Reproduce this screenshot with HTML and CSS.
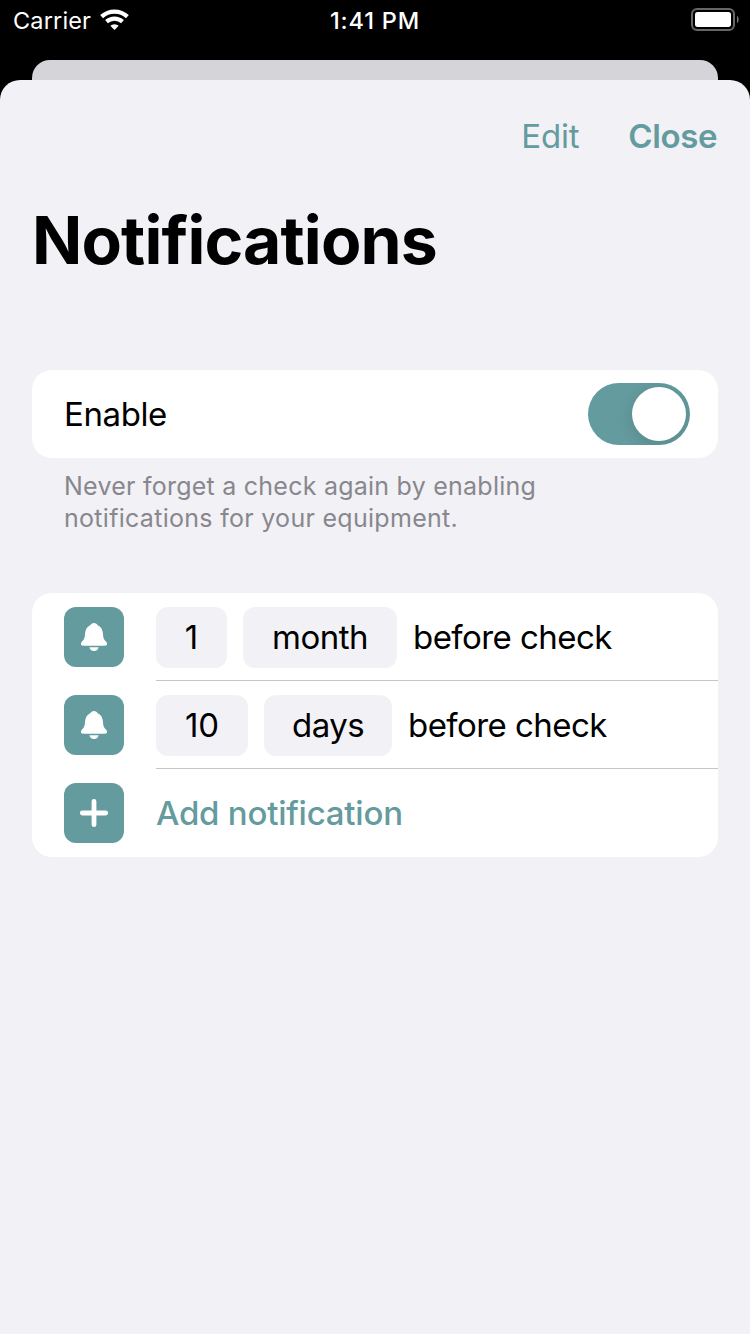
FILE: index.html
```html
<!DOCTYPE html>
<html lang="en">
<head>
<meta charset="utf-8">
<title>Notifications</title>
<link rel="stylesheet" href="styles.css">
</head>
<body>
<svg class="symbols" aria-hidden="true">
  <symbol id="bell" viewBox="0 0 60 60">
    <path fill="#fff" d="M30 16C31.8 16 33.2 17 33.8 18.3C37.2 20 38.8 23.2 39 27C39.2 31 39.8 32.4 42 34.4C42.8 35.2 43.1 36 43.1 36.8C43.1 38.1 42.2 38.8 40.9 38.8H19.1C17.8 38.8 16.9 38.1 16.9 36.8C16.9 36 17.2 35.2 18 34.4C20.2 32.4 20.8 31 21 27C21.2 23.2 22.8 20 26.2 18.3C26.8 17 28.2 16 30 16ZM25.4 40.3H34.6C34.2 42.6 32.5 44 30 44S25.8 42.6 25.4 40.3Z"/>
  </symbol>
</svg>
<header class="status">
  <div class="carrier"><span class="carrier-name">Carrier</span>
    <svg class="wifi" width="30" height="23" viewBox="0 0 30 23"><g fill="none" stroke="#fff" stroke-width="4.2"><path d="M1.6 8.6A19 19 0 0 1 27.4 8.6"/><path d="M6.5 13.6A12 12 0 0 1 22.5 13.6"/></g><path fill="#fff" d="M10.3 17.8A6.2 6.2 0 0 1 18.7 17.8L14.5 22.1Z"/></svg>
  </div>
  <time class="time">1:41 PM</time>
  <svg class="battery" width="50" height="25" viewBox="0 0 50 25"><rect x="2" y="2" width="42" height="21" rx="5" fill="none" stroke="#666" stroke-width="2"/><rect x="5" y="5" width="36" height="15" rx="2.7" fill="#fff"/><path d="M47 9C49.2 10 49.2 15 47 16Z" fill="#777"/></svg>
</header>
<div class="backdrop"></div>
<main class="sheet">
  <nav class="actions"><a class="edit">Edit</a><a class="close">Close</a></nav>
  <h1 class="title">Notifications</h1>
  <section class="card enable">
    <span class="enable-label">Enable</span>
    <span class="switch"><span class="knob"></span></span>
  </section>
  <p class="hint">Never forget a check again by enabling<br><span class="hint-end">notifications for your equipment.</span></p>
  <section class="card">
    <div class="row">
      <span class="tile"><svg width="60" height="60"><use href="#bell"/></svg></span>
      <div class="content"><span class="chip one">1</span><span class="chip month">month</span><span class="before">before check</span></div>
    </div>
    <div class="row">
      <span class="tile"><svg width="60" height="60"><use href="#bell"/></svg></span>
      <div class="content"><span class="chip ten">10</span><span class="chip days">days</span><span class="before">before check</span></div>
    </div>
    <div class="row">
      <span class="tile"><svg width="60" height="60" viewBox="0 0 60 60"><path d="M30 18.3V41.7M18.3 30H41.7" stroke="#fff" stroke-width="4.8" stroke-linecap="round"/></svg></span>
      <div class="content last"><span class="add">Add notification</span></div>
    </div>
  </section>
</main>
</body>
</html>
```

FILE: styles.css
```css
* { box-sizing: border-box; }
body {
  margin: 0;
  height: 1334px;
  display: flex;
  flex-direction: column;
  background: #000;
  color: #000;
  font-family: Inter, "Liberation Sans", sans-serif;
  font-size: 33px;
  overflow: hidden;
}
.symbols { display: none; }
.status {
  height: 60px;
  flex: none;
  display: grid;
  grid-template-columns: 1fr auto 1fr;
  color: #fff;
  font-size: 23.5px;
  line-height: 42px;
}
.carrier { display: flex; padding-left: 13px; gap: 9px; }
.carrier-name { letter-spacing: 0.15px; }
.wifi { margin-top: 8px; }
.time { font-weight: 500; letter-spacing: 0.85px; }
.battery { justify-self: end; margin: 7px 10px 0 0; }
.backdrop {
  height: 20px;
  flex: none;
  margin: 0 32px;
  background: #d5d4d9;
  border-radius: 18px 18px 0 0;
}
.sheet {
  flex: 1;
  padding: 0 32px;
  background: #f2f1f6;
  border-radius: 20px 20px 0 0;
}
.actions {
  display: flex;
  justify-content: flex-end;
  gap: 49px;
  height: 112px;
  padding-right: 1px;
  line-height: 112px;
  color: #649b9e;
}
.edit { letter-spacing: -0.2px; }
.close { font-weight: 600; letter-spacing: -0.4px; }
.title {
  margin: 0;
  height: 178px;
  line-height: 96px;
  font-size: 66px;
  font-weight: 700;
  letter-spacing: -0.85px;
}
.card { background: #fff; border-radius: 20px; overflow: hidden; }
.enable {
  height: 88px;
  display: flex;
  align-items: center;
  justify-content: space-between;
  padding: 0 28px 0 32px;
}
.enable-label { letter-spacing: -0.4px; }
.switch {
  width: 102px;
  height: 62px;
  padding: 4px;
  display: flex;
  justify-content: flex-end;
  border-radius: 31px;
  background: #649b9e;
  overflow: hidden;
}
.knob {
  width: 54px;
  height: 54px;
  border-radius: 50%;
  background: #fff;
  box-shadow: 0 4px 16px rgba(0, 0, 0, 0.12);
}
.hint {
  margin: 0;
  padding: 12px 32px 0;
  height: 135px;
  color: #88878d;
  font-size: 25px;
  line-height: 32px;
  letter-spacing: 0.24px;
}
.hint-end { letter-spacing: 0.29px; }
.row { height: 88px; display: flex; padding-left: 32px; gap: 32px; }
.tile {
  width: 60px;
  height: 60px;
  margin-top: 14px;
  border-radius: 12px;
  background: #649b9e;
}
.tile svg { display: block; }
.content {
  flex: 1;
  display: flex;
  gap: 16px;
  border-bottom: 1px solid #c5c5c7;
  line-height: 88px;
}
.last { border-bottom: 0; }
.chip {
  height: 61px;
  margin-top: 14px;
  line-height: 61px;
  text-align: center;
  border-radius: 12px;
  background: #f2f1f6;
}
.one { width: 71px; }
.month { width: 154px; }
.ten { width: 92px; }
.days { width: 128px; }
.month, .days, .before { letter-spacing: -0.55px; }
.add { color: #649b9e; font-weight: 500; letter-spacing: -0.23px; }
```
